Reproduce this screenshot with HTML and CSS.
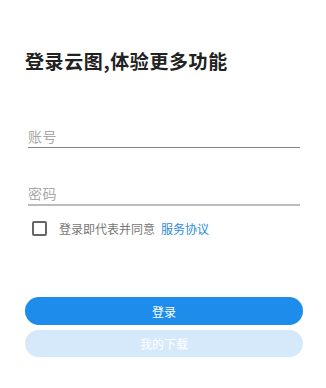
FILE: index.html
```html
<!DOCTYPE html>
<html lang="zh-CN">
<head>
    <meta charset="UTF-8">
    <meta name="viewport" content="width=device-width, initial-scale=1.0">
    <title>登录</title>
    <link rel="stylesheet" href="styles.css">
</head>
<body>
    <div class="login">
        <!-- Title -->
        <h1 class="title">登录云图,体验更多功能</h1>

        <!-- Inputs -->
        <div class="field account">
            <span class="placeholder">账号</span>
        </div>
        <div class="field password">
            <span class="placeholder">密码</span>
        </div>

        <!-- Agreement -->
        <label class="agree">
            <span class="checkbox"></span>
            <span class="agree-text">登录即代表并同意</span>
            <span class="link">服务协议</span>
        </label>

        <!-- Buttons -->
        <div class="actions">
            <button class="btn primary">登录</button>
            <button class="btn secondary">我的下载</button>
        </div>
    </div>
</body>
</html>
```

FILE: styles.css
```css
/* General Styles */
body {
    margin: 0;
    background-color: #fff;
    font-family: "Noto Sans CJK SC", "Noto Sans", sans-serif;
}

.login {
    padding: 49px 23px 0 25px;
}

.title {
    margin: 0;
    font-size: 19px;
    line-height: 24px;
    letter-spacing: 0.6px;
    font-weight: bold;
    color: #222;
}

.field {
    margin: 0 3px 0 3px;
    padding-bottom: 3px;
}

.placeholder {
    display: block;
    font-size: 14px;
    line-height: 15px;
    letter-spacing: 0.5px;
    color: #a8a8a8;
}

.field.account {
    margin-top: 56px;
    border-bottom: 1.5px solid #858585;
}

.field.password {
    margin-top: 38px;
    border-bottom: 2px solid #bdbdbd;
}

.agree {
    display: flex;
    align-items: center;
    margin-top: 15px;
    margin-left: 7px;
    height: 15px;
    font-size: 12px;
    line-height: 15px;
}

.checkbox {
    width: 11px;
    height: 11px;
    border: 2px solid #666;
    border-radius: 2px;
    margin-right: 12px;
}

.agree-text {
    color: #777;
    margin-right: 6px;
}

.link {
    color: #2a8ae0;
}

.actions {
    display: flex;
    flex-direction: column;
    gap: 5px;
    margin-top: 61px;
}

.btn {
    border: none;
    border-radius: 14px;
    height: 28px;
    font-family: inherit;
    font-size: 12px;
    color: #fff;
    padding: 0;
}

.btn.primary {
    background-color: #1e8ceb;
}

.btn.secondary {
    background-color: #d6e9fb;
    height: 27px;
}
```
